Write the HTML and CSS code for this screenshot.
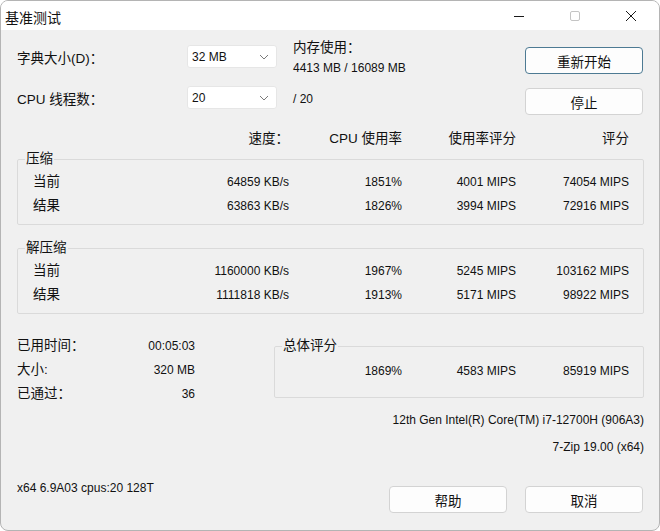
FILE: index.html
```html
<!DOCTYPE html>
<html lang="zh-CN">
<head>
    <meta charset="UTF-8">
    <title>基准测试</title>
    <link rel="stylesheet" href="styles.css">
</head>
<body>
    <div class="window">
        <div class="titlebar">
            <span class="title">基准测试</span>
            <div class="controls">
                <span class="ctl"><svg width="12" height="12" viewBox="0 0 12 12"><path d="M1 6.5 H11" stroke="#1a1a1a" stroke-width="1"/></svg></span>
                <span class="ctl"><svg width="12" height="12" viewBox="0 0 12 12"><rect x="1.5" y="1.5" width="9" height="9" rx="1.5" fill="none" stroke="#c4c4c4" stroke-width="1"/></svg></span>
                <span class="ctl"><svg width="12" height="12" viewBox="0 0 12 12"><path d="M1 1 L11 11 M11 1 L1 11" stroke="#1a1a1a" stroke-width="1"/></svg></span>
            </div>
        </div>

        <div class="content">
            <!-- settings + buttons -->
            <div class="top">
                <div class="settings">
                    <div class="set-row">
                        <span class="set-label zh">字典大小(D)：</span>
                        <div class="combo">32 MB<svg width="10" height="6" viewBox="0 0 10 6"><path d="M1 1 L5 5 L9 1" fill="none" stroke="#7a7a7a"/></svg></div>
                        <div class="mem">
                            <div class="zh">内存使用：</div>
                            <div>4413 MB / 16089 MB</div>
                        </div>
                    </div>
                    <div class="set-row">
                        <span class="set-label zh">CPU 线程数：</span>
                        <div class="combo">20<svg width="10" height="6" viewBox="0 0 10 6"><path d="M1 1 L5 5 L9 1" fill="none" stroke="#7a7a7a"/></svg></div>
                        <span class="threads">/ 20</span>
                    </div>
                </div>
                <div class="actions">
                    <button class="btn btn-default">重新开始</button>
                    <button class="btn">停止</button>
                </div>
            </div>

            <div class="cols head zh">
                <span></span>
                <span>速度：</span>
                <span>CPU 使用率</span>
                <span>使用率评分</span>
                <span>评分</span>
            </div>

            <fieldset class="group">
                <legend class="zh">压缩</legend>
                <div class="cols row">
                    <span class="name zh">当前</span>
                    <span>64859 KB/s</span>
                    <span>1851%</span>
                    <span>4001 MIPS</span>
                    <span>74054 MIPS</span>
                </div>
                <div class="cols row">
                    <span class="name zh">结果</span>
                    <span>63863 KB/s</span>
                    <span>1826%</span>
                    <span>3994 MIPS</span>
                    <span>72916 MIPS</span>
                </div>
            </fieldset>

            <fieldset class="group group-2">
                <legend class="zh">解压缩</legend>
                <div class="cols row">
                    <span class="name zh">当前</span>
                    <span>1160000 KB/s</span>
                    <span>1967%</span>
                    <span>5245 MIPS</span>
                    <span>103162 MIPS</span>
                </div>
                <div class="cols row">
                    <span class="name zh">结果</span>
                    <span>1111818 KB/s</span>
                    <span>1913%</span>
                    <span>5171 MIPS</span>
                    <span>98922 MIPS</span>
                </div>
            </fieldset>

            <div class="bottom">
                <div class="stats">
                    <span class="zh">已用时间：</span><span class="val">00:05:03</span>
                    <span class="zh">大小:</span><span class="val">320 MB</span>
                    <span class="zh">已通过：</span><span class="val">36</span>
                </div>
                <fieldset class="group total">
                    <legend class="zh">总体评分</legend>
                    <div class="total-row">
                        <span>1869%</span>
                        <span>4583 MIPS</span>
                        <span>85919 MIPS</span>
                    </div>
                </fieldset>
            </div>

            <div class="info cpu">12th Gen Intel(R) Core(TM) i7-12700H (906A3)</div>
            <div class="info ver">7-Zip 19.00 (x64)</div>

            <div class="footer">
                <span class="build">x64 6.9A03 cpus:20 128T</span>
                <button class="btn">帮助</button>
                <button class="btn">取消</button>
            </div>
        </div>
    </div>
</body>
</html>
```

FILE: styles.css
```css
*{ margin: 0; padding: 0; box-sizing: border-box;}
html, body{ background: #fff;}
body{ font-family: "Liberation Sans", "Noto Sans CJK SC", sans-serif; font-size: 12px; color: #111; overflow: hidden;}
.zh{ font-size: 13.5px;}

.window{ width: 660px; height: 531px; background: #f0f0f0; border: 1px solid #b4b4b4; border-radius: 8px; overflow: hidden;}

.titlebar{ height: 29px; background: #fff; display: flex; align-items: center; justify-content: space-between;}
.title{ font-size: 14px; padding-left: 4px; margin-top: 2px;}
.controls{ display: flex; height: 100%;}
.ctl{ width: 56px; display: flex; align-items: center; justify-content: center;}

.content{ padding: 0 15px 0 16px;}

.top{ display: flex; justify-content: space-between; padding-top: 15px;}
.set-row{ display: flex; align-items: center; height: 23px;}
.set-row + .set-row{ margin-top: 18px;}
.set-label{ width: 170px;}
.combo{ width: 90px; height: 23px; background: #fff; border: 1px solid #e6e6e6; border-radius: 3px; display: flex; align-items: center; justify-content: space-between; padding: 0 7px 0 4px;}
.mem{ margin-left: 16px; line-height: 20px; margin-top: 3px;}
.threads{ margin-left: 16px; margin-top: 2px;}

.actions{ display: flex; flex-direction: column; gap: 14px; padding-top: 2px; margin-right: 1px;}
.btn{ width: 118px; height: 27px; font: inherit; font-size: 13.5px; color: #111; background: #fdfdfd; border: 1px solid #d3d3d3; border-radius: 4px;}
.btn-default{ border-color: #4d7a93;}

.cols{ display: grid; grid-template-columns: 150px 122px 113px 114px 113px; text-align: right;}
.head{ height: 20px; line-height: 20px; margin-top: 14px;}

.group{ border: 1px solid #dadada; border-radius: 2px; margin-top: 2px; padding: 3px 0 6px;}
.group legend{ line-height: 16px; margin-left: 7px; padding: 0 1px;}
.group-2{ margin-top: 15px;}
.row{ height: 24px; line-height: 24px; grid-template-columns: 149px 122px 113px 114px 113px;}
.row .name{ text-align: left; padding-left: 15px;}

.bottom{ display: flex; justify-content: space-between; margin-top: 20px;}
.stats{ width: 178px; display: grid; grid-template-columns: 1fr auto; grid-auto-rows: 24px; line-height: 24px;}
.stats .val{ text-align: right;}
.total{ width: 370px; margin-top: 4px; padding: 5px 0 14px; align-self: flex-start;}
.total legend{ margin-left: 7px;}
.total-row{ display: grid; grid-template-columns: 127px 114px 113px; height: 24px; line-height: 24px; text-align: right;}

.info{ text-align: right; line-height: 20px;}
.cpu{ margin-top: 4px;}
.ver{ margin-top: 7px;}

.footer{ display: flex; align-items: flex-start; gap: 18px; margin-top: 21px;}
.build{ flex: 1; line-height: 20px;}
.footer .btn{ margin-top: 8px;}
.footer .btn:last-child{ margin-right: 1px;}
```
